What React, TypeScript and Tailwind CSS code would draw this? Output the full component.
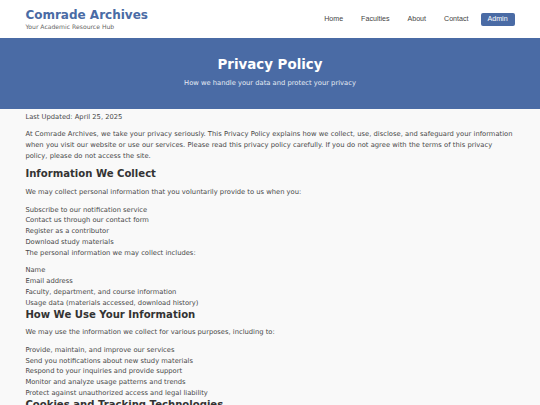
import React from "react";

export default function App() {
  const body = "text-[6.75px] leading-[10.8px]";
  const h2 = "text-[10.1px] leading-[11.7px] font-bold text-[#333]";
  return (
    <div className="min-h-screen bg-[#f9f9f9] font-['DejaVu_Sans',Verdana,sans-serif] text-[#484848]">
      <header className="h-[38px] bg-white shadow-[0_1px_2px_rgba(0,0,0,0.08)]">
        <div className="mx-auto flex h-full w-[506px] items-center justify-between px-[8.4px]">
          <div className="flex flex-col pt-[1px]">
            <div className="text-[12px] font-bold leading-[14px] text-[#4a6ba5]">Comrade Archives</div>
            <div className="mt-[1px] text-[6.1px] leading-[8px] text-[#666]">Your Academic Resource Hub</div>
          </div>
          <nav className="flex items-center gap-[18px] pt-[1px] font-['Liberation_Sans',Arial,sans-serif] text-[7.1px] text-[#444]">
            <span>Home</span>
            <span>Faculties</span>
            <span>About</span>
            <span className="mr-[-6px]">Contact</span>
            <span className="rounded-[2px] bg-[#4a6ba5] px-[7px] py-[3px] leading-[7px] text-white">Admin</span>
          </nav>
        </div>
      </header>

      <section className="flex h-[71px] flex-col items-center bg-[#4a6ba5] pt-[18.5px] text-white">
        <h1 className="text-[13.4px] font-bold leading-[16px]">Privacy Policy</h1>
        <p className="mt-[5.5px] text-[6.75px] leading-[10px] text-[#e6ebf4]">How we handle your data and protect your privacy</p>
      </section>

      <main className="mx-auto flex w-[506px] flex-col px-[8.4px] pt-[2.6px]">
        <p className={body}>Last Updated: April 25, 2025</p>
        <p className={`${body} mt-[6.75px] [word-spacing:0.12px]`}>
          At Comrade Archives, we take your privacy seriously. This Privacy Policy explains how we collect, use, disclose, and safeguard your information when you visit our website or use our services. Please read this privacy policy carefully. If you do not agree with the terms of this privacy policy, please do not access the site.
        </p>
        <h2 className={`${h2} mt-[6.75px]`}>Information We Collect</h2>
        <p className={`${body} mt-[7px]`}>We may collect personal information that you voluntarily provide to us when you:</p>
        <ul className={`${body} mt-[6.75px]`}>
          <li>Subscribe to our notification service</li>
          <li>Contact us through our contact form</li>
          <li>Register as a contributor</li>
          <li>Download study materials</li>
        </ul>
        <p className={body}>The personal information we may collect includes:</p>
        <ul className={`${body} mt-[6.75px]`}>
          <li>Name</li>
          <li>Email address</li>
          <li>Faculty, department, and course information</li>
          <li>Usage data (materials accessed, download history)</li>
        </ul>
        <h2 className={`${h2} mt-[0.5px]`}>How We Use Your Information</h2>
        <p className={`${body} mt-[6.75px]`}>We may use the information we collect for various purposes, including to:</p>
        <ul className={`${body} mt-[6.5px]`}>
          <li>Provide, maintain, and improve our services</li>
          <li>Send you notifications about new study materials</li>
          <li>Respond to your inquiries and provide support</li>
          <li>Monitor and analyze usage patterns and trends</li>
          <li>Protect against unauthorized access and legal liability</li>
        </ul>
        <h2 className={`${h2} mt-[0.5px]`}>Cookies and Tracking Technologies</h2>
        <p className={`${body} mt-[6.75px]`}>We use cookies and similar tracking technologies to track activity on our website and hold certain information.</p>
      </main>
    </div>
  );
}
